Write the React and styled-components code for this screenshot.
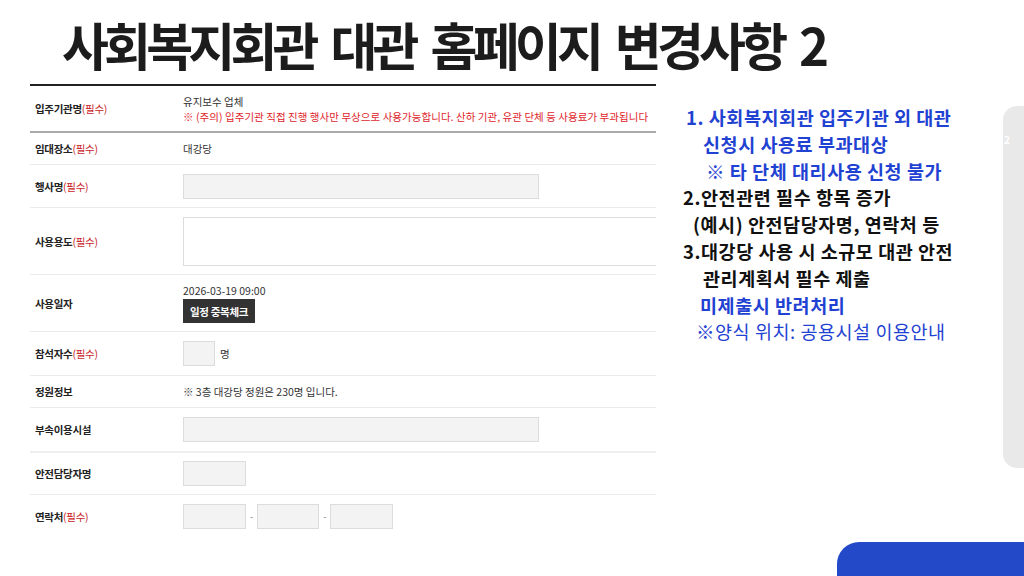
import React from "react";
import styled, { createGlobalStyle } from "styled-components";

const GlobalStyle = createGlobalStyle`
  html, body { margin: 0; padding: 0; background: #fff; }
  body { font-family: "Noto Sans CJK KR", "Noto Sans", sans-serif; }
  * { box-sizing: border-box; }
`;

const Slide = styled.div`
  position: relative;
  width: 1024px;
  height: 576px;
  overflow: hidden;
  background: #fff;
  display: flex;
  flex-direction: column;
`;

const Title = styled.h1`
  margin: 0;
  padding: 11px 0 0 62px;
  height: 84px;
  font-family: "Noto Sans CJK KR", sans-serif;
  font-weight: 700;
  font-size: 51px;
  line-height: 66px;
  letter-spacing: -4.8px;
  word-spacing: 9px;
  color: #1c1c1c;
  white-space: nowrap;
`;

const Body = styled.div`
  display: flex;
  flex: 1;
  align-items: flex-start;
`;

const FormPanel = styled.div`
  width: 626px;
  margin-left: 30px;
  border-top: 2px solid #222;
  overflow: hidden;
  flex-shrink: 0;
`;

const Row = styled.div`
  display: grid;
  grid-template-columns: 153px 1fr;
  align-items: center;
  box-sizing: content-box;
  height: ${(p) => p.$h}px;
  border-bottom: ${(p) => (p.$last ? "none" : p.$strong ? `2px solid ${p.$strong}` : "1px solid #ebebeb")};
`;

const Label = styled.div`
  padding-left: 5px;
  font-size: 10.5px;
  font-weight: 700;
  color: #222;
  letter-spacing: -0.3px;
  white-space: nowrap;
`;

const Req = styled.span`
  color: #c8262a;
  font-weight: 400;
`;

const Value = styled.div`
  display: flex;
  flex-direction: ${(p) => (p.$column ? "column" : "row")};
  align-items: ${(p) => (p.$column ? "flex-start" : "center")};
  gap: ${(p) => p.$gap || 0}px;
  font-size: 10.5px;
  color: #333;
  line-height: 15px;
  white-space: nowrap;
`;

const Warn = styled.span`
  color: #e0242b;
  letter-spacing: 0.05px;
`;

const Field = styled.div`
  width: ${(p) => p.$w}px;
  height: ${(p) => p.$hgt || 25}px;
  background: ${(p) => (p.$white ? "#fff" : "#f3f3f3")};
  border: 1px solid #dcdcdc;
  flex-shrink: 0;
`;

const Dash = styled.span`
  font-size: 9px;
  color: #777;
  padding: 0 4px;
`;

const DarkButton = styled.div`
  width: 72px;
  height: 24px;
  background: #333;
  color: #fff;
  font-size: 10.5px;
  font-weight: 700;
  display: flex;
  align-items: center;
  justify-content: center;
  letter-spacing: -0.3px;
`;

const Notes = styled.div`
  flex: 1;
  padding: 20px 0 0 27px;
  display: flex;
  flex-direction: column;
`;

const Line = styled.div`
  padding-left: ${(p) => p.$indent || 0}px;
  font-size: 18.5px;
  line-height: 26.8px;
  letter-spacing: 0.55px;
  font-weight: ${(p) => (p.$light ? 400 : 700)};
  color: ${(p) => (p.$blue ? "#1f42d2" : "#111")};
  white-space: nowrap;
`;

const SideTab = styled.div`
  width: 21px;
  height: 362px;
  margin-top: 22px;
  flex-shrink: 0;
  background: #e9e9e9;
  border-radius: 14px 0 0 14px;
  padding: 27px 0 0 1px;
  font-size: 10px;
  font-weight: 700;
  color: #fff;
  font-family: "Noto Sans", sans-serif;
`;

const CornerTab = styled.div`
  position: absolute;
  left: 837px;
  top: 542px;
  width: 200px;
  height: 60px;
  background: #2349c9;
  border-radius: 22px 0 0 0;
`;

const rows = [
  { h: 45, strong: "#aaa", label: "입주기관명", req: true, kind: "org" },
  { h: 31, label: "임대장소", req: true, kind: "text", text: "대강당" },
  { h: 42, label: "행사명", req: true, kind: "field", w: 356 },
  { h: 66, label: "사용용도", req: true, kind: "area" },
  { h: 56, label: "사용일자", kind: "date" },
  { h: 43, label: "참석자수", req: true, kind: "count" },
  { h: 31, label: "정원정보", kind: "text", text: "※ 3층 대강당 정원은 230명 입니다." },
  { h: 43, strong: "#efefef", label: "부속이용시설", kind: "field", w: 356 },
  { h: 41, label: "안전담당자명", kind: "field", w: 63 },
  { h: 42, label: "연락처", req: true, kind: "phone", last: true },
];

function RowValue({ r }) {
  switch (r.kind) {
    case "org":
      return (
        <Value $column>
          <span>유지보수 업체</span>
          <Warn>※ (주의) 입주기관 직접 진행 행사만 무상으로 사용가능합니다. 산하 기관, 유관 단체 등 사용료가 부과됩니다</Warn>
        </Value>
      );
    case "text":
      return <Value>{r.text}</Value>;
    case "field":
      return (
        <Value>
          <Field $w={r.w} />
        </Value>
      );
    case "area":
      return (
        <Value>
          <Field $w={500} $hgt={49} $white />
        </Value>
      );
    case "date":
      return (
        <Value $column $gap={1}>
          <span>2026-03-19 09:00</span>
          <DarkButton>일정 중복체크</DarkButton>
        </Value>
      );
    case "count":
      return (
        <Value $gap={5}>
          <Field $w={32} />
          <span>명</span>
        </Value>
      );
    case "phone":
      return (
        <Value>
          <Field $w={63} />
          <Dash>-</Dash>
          <Field $w={62} />
          <Dash>-</Dash>
          <Field $w={63} />
        </Value>
      );
    default:
      return null;
  }
}

const notes = [
  { t: "1. 사회복지회관 입주기관 외 대관", i: 3, blue: true },
  { t: "신청시 사용료 부과대상", i: 20, blue: true },
  { t: "※ 타 단체 대리사용 신청 불가", i: 23, blue: true },
  { t: "2.안전관련 필수 항목 증가", i: 0 },
  { t: "(예시) 안전담당자명, 연락처 등", i: 10 },
  { t: "3.대강당 사용 시 소규모 대관 안전", i: 0 },
  { t: "관리계획서 필수 제출", i: 20 },
  { t: "미제출시 반려처리", i: 17, blue: true },
  { t: "※양식 위치: 공용시설 이용안내", i: 13, blue: true, light: true },
];

export default function App() {
  return (
    <>
      <GlobalStyle />
      <Slide>
        <Title>사회복지회관 대관 홈페이지 변경사항 2</Title>
        <Body>
          <FormPanel>
            {rows.map((r) => (
              <Row key={r.label} $h={r.h} $strong={r.strong} $last={r.last}>
                <Label>
                  {r.label}
                  {r.req && <Req>(필수)</Req>}
                </Label>
                <RowValue r={r} />
              </Row>
            ))}
          </FormPanel>
          <Notes>
            {notes.map((n) => (
              <Line key={n.t} $indent={n.i} $blue={n.blue} $light={n.light}>
                {n.t}
              </Line>
            ))}
          </Notes>
          <SideTab>2</SideTab>
        </Body>
        <CornerTab />
      </Slide>
    </>
  );
}
